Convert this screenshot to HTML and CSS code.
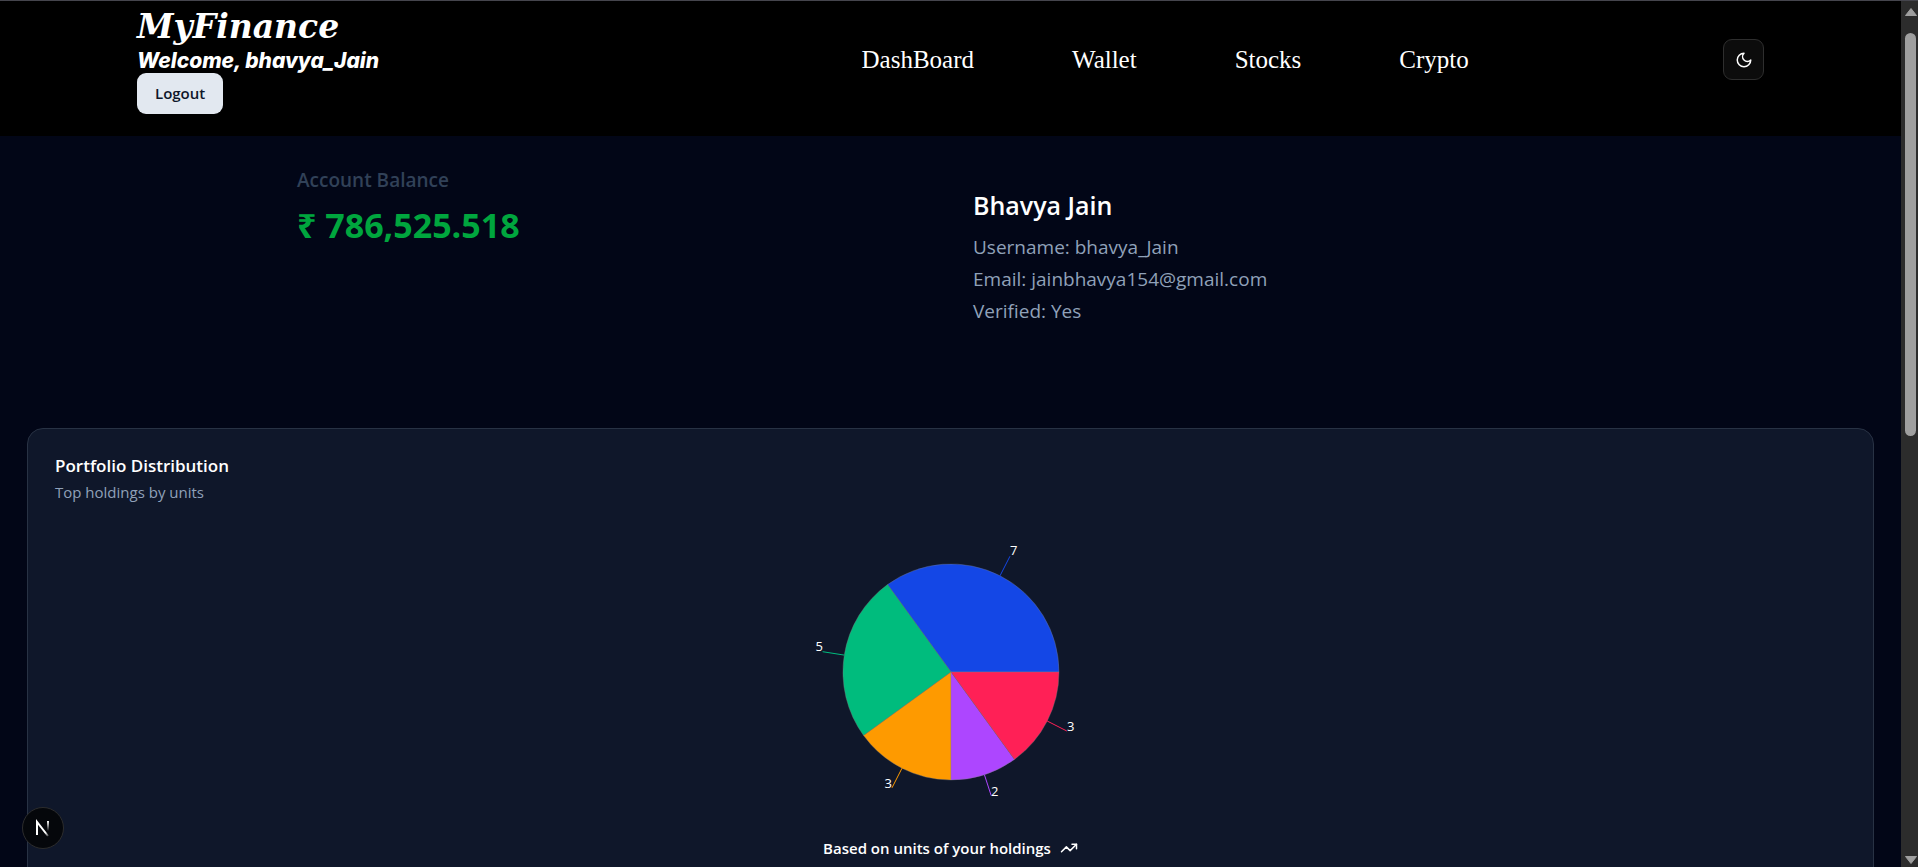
FILE: index.html
```html
<!DOCTYPE html>
<html lang="en">
<head>
<meta charset="utf-8">
<meta name="viewport" content="width=device-width, initial-scale=1">
<title>MyFinance</title>
<link rel="stylesheet" href="styles.css">
</head>
<body>
<div class="page">
  <header class="header">
    <div class="brand">
      <h1 class="logo">MyFinance</h1>
      <p class="welcome">Welcome, bhavya_Jain</p>
      <button class="logout" type="button">Logout</button>
    </div>
    <nav class="nav">
      <a href="#dashboard">DashBoard</a>
      <a href="#wallet">Wallet</a>
      <a href="#stocks">Stocks</a>
      <a href="#crypto">Crypto</a>
    </nav>
    <button class="theme" type="button" aria-label="Toggle theme">
      <svg width="18" height="18" viewBox="0 0 24 24" fill="none" stroke="currentColor" stroke-width="2" stroke-linecap="round" stroke-linejoin="round"><path d="M12 3a6 6 0 0 0 9 9 9 9 0 1 1-9-9Z"/></svg>
    </button>
  </header>
  <main class="main">
    <section class="summary">
      <div class="balance">
        <h2 class="balance-label">Account Balance</h2>
        <p class="balance-amount">₹ 786,525.518</p>
      </div>
      <div class="profile">
        <h2 class="profile-name">Bhavya Jain</h2>
        <p>Username: bhavya_Jain</p>
        <p>Email: jainbhavya154@gmail.com</p>
        <p>Verified: Yes</p>
      </div>
    </section>
    <section class="card">
      <h3 class="card-title">Portfolio Distribution</h3>
      <p class="card-sub">Top holdings by units</p>
      <svg class="pie" width="280" height="280" viewBox="-140 -140 280 280" role="img" aria-label="Portfolio distribution">
        <g stroke="#808080" stroke-opacity=".6" stroke-width=".6">
          <path fill="#1447e6" d="M0 0L108 0A108 108 0 0 0 -63.5 -87.4Z"/>
          <path fill="#00bc7d" d="M0 0L-63.5 -87.4A108 108 0 0 0 -87.4 63.5Z"/>
          <path fill="#fe9a00" d="M0 0L-87.4 63.5A108 108 0 0 0 0 108Z"/>
          <path fill="#ad46ff" d="M0 0L0 108A108 108 0 0 0 63.5 87.4Z"/>
          <path fill="#ff2056" d="M0 0L63.5 87.4A108 108 0 0 0 108 0Z"/>
        </g>
        <path stroke="#1447e6" d="M49 -96.2L59 -115.8"/>
        <path stroke="#00bc7d" d="M-106.7 -16.9L-128.4 -20.3"/>
        <path stroke="#fe9a00" d="M-49 96.2L-59 115.8"/>
        <path stroke="#ad46ff" d="M33.4 102.7L40.2 123.6"/>
        <path stroke="#ff2056" d="M96.2 49L115.8 59"/>
        <g class="pie-labels">
          <text x="59" y="-117">7</text>
          <text x="-128" y="-21" text-anchor="end">5</text>
          <text x="-59" y="116" text-anchor="end">3</text>
          <text x="40" y="124">2</text>
          <text x="116" y="59">3</text>
        </g>
      </svg>
      <p class="card-foot">Based on units of your holdings
        <svg width="18" height="18" viewBox="0 0 24 24" fill="none" stroke="currentColor" stroke-width="2" stroke-linecap="round" stroke-linejoin="round"><path d="M22 7L13.5 15.5 8.500 10.500 2 17"/><path d="M16 7h6v6"/></svg>
      </p>
    </section>
  </main>
</div>
<div class="scrollbar" aria-hidden="true">
  <svg width="14" height="10" viewBox="0 0 14 10"><path d="M7 1.500L12.500 8.500H1.500Z" fill="#9f9f9f" stroke="#9f9f9f" stroke-linejoin="round"/></svg>
  <div class="track"><div class="thumb"></div></div>
  <svg width="14" height="10" viewBox="0 0 14 10"><path d="M7 8.500L12.500 1.500H1.500Z" fill="#9f9f9f" stroke="#9f9f9f" stroke-linejoin="round"/></svg>
</div>
<button class="devtools" type="button" aria-label="Open developer tools">
  <svg width="40" height="40" viewBox="0 0 40 40" fill="none">
    <defs>
      <linearGradient id="diag" x1="20" y1="20" x2="26" y2="28" gradientUnits="userSpaceOnUse"><stop offset=".5" stop-color="#fff"/><stop offset="1" stop-color="#fff" stop-opacity=".2"/></linearGradient>
      <linearGradient id="stem" x1="25" y1="13" x2="25" y2="23" gradientUnits="userSpaceOnUse"><stop stop-color="#fff"/><stop offset="1" stop-color="#fff" stop-opacity="0"/></linearGradient>
    </defs>
    <path d="M14 27V14L25 28" stroke="url(#diag)" stroke-width="2"/>
    <path d="M25 13V23" stroke="url(#stem)" stroke-width="2"/>
  </svg>
</button>
</body>
</html>
```
FILE: styles.css
```css
* { box-sizing: border-box; }
h1, h2, h3, p { margin: 0; }
body {
  margin: 0;
  height: 100vh;
  overflow: hidden;
  display: grid;
  grid-template-columns: 1fr 17px;
  border-top: 1px solid #45454d;
  background: #020617;
  color: #fff;
  font-family: "Open Sans", "Noto Sans", sans-serif;
}
button { font: inherit; padding: 0; cursor: pointer; }
.page { min-width: 0; min-height: 0; overflow: hidden; }

.header {
  display: grid;
  grid-template-columns: 27fr auto 11fr;
  align-items: center;
  padding: 4px 137px 22px;
  background: #000;
}
.brand { display: flex; flex-direction: column; align-items: flex-start; }
.logo {
  font: italic 700 33px/44px "DejaVu Serif", serif;
}
.welcome { font: italic 800 21px/24px Inter, sans-serif; }
.logout {
  height: 41px;
  padding: 0 18px 2px;
  border: 0;
  border-radius: 9px;
  background: #e2e8f0;
  color: #0f172a;
  font-size: 15px;
  font-weight: 600;
}
.nav { display: flex; gap: 98px; }
.nav a {
  color: #fff;
  text-decoration: none;
  font: 25px/32px "Liberation Serif", serif;
}
.theme {
  justify-self: end;
  display: grid;
  place-items: center;
  width: 41px;
  height: 41px;
  border: 1px solid #2e2e2e;
  border-radius: 9px;
  background: #0c0c0c;
  color: #fff;
}

.main { padding: 0 27px; }
.summary {
  display: grid;
  grid-template-columns: 1fr 1fr;
  gap: 45px;
  padding: 27px 270px 0;
  height: 292px;
}
.balance-label { font-size: 19px; line-height: 34px; font-weight: 600; color: #314158; }
.balance-amount { margin-top: 6px; font-size: 34px; line-height: 44px; font-weight: 700; color: #00a63e; }
.profile { padding-top: 22px; font-size: 19px; line-height: 32px; color: #90a1b9; }
.profile-name { margin-bottom: 6px; font-size: 25px; line-height: 40px; font-weight: 600; color: #fff; }

.card {
  display: flex;
  flex-direction: column;
  padding: 23px 27px 60px;
  border: 1px solid #283244;
  border-radius: 16px;
  background: #0f172a;
}
.card-title { font-size: 17px; line-height: 28px; font-weight: 600; }
.card-sub { font-size: 15px; line-height: 24px; color: #90a1b9; }
.pie { align-self: center; margin: 28px 0 24px; }
.pie-labels { fill: #fff; font-size: 13px; }
.card-foot {
  display: flex;
  justify-content: center;
  align-items: center;
  gap: 9px;
  font-size: 15px;
  line-height: 24px;
  font-weight: 600;
}

.scrollbar {
  display: flex;
  flex-direction: column;
  align-items: center;
  gap: 16px;
  padding: 6px 0 2px 2px;
  background: #2c2c2c;
}
.track { flex: 1; width: 11px; }
.thumb { height: 50%; border-radius: 6px; background: #9f9f9f; }

.devtools {
  position: fixed;
  left: 22px;
  bottom: 18px;
  width: 42px;
  height: 42px;
  border: 1px solid #2d2d2d;
  border-radius: 50%;
  background: #05070b;
}
.devtools svg { display: block; }
```
